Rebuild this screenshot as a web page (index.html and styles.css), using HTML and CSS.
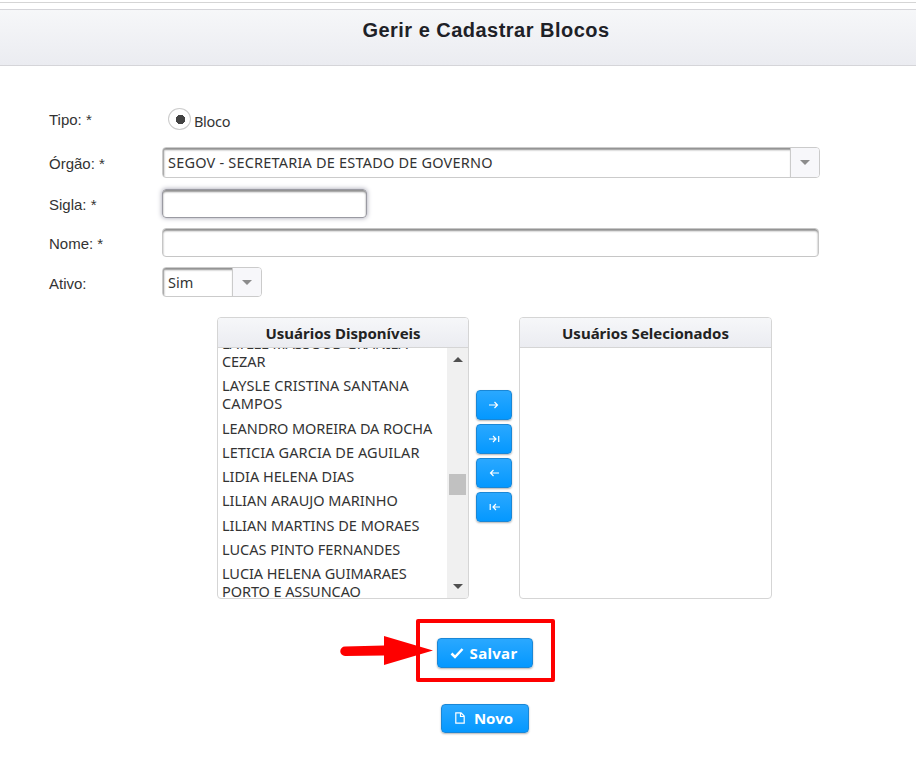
FILE: index.html
```html
<!DOCTYPE html>
<html lang="pt-BR">
<head>
<meta charset="utf-8">
<title>Gerir e Cadastrar Blocos</title>
<link rel="stylesheet" href="styles.css">
</head>
<body>
<div class="topline"></div>
<header class="titlebar"><h1>Gerir e Cadastrar Blocos</h1></header>
<main>
  <form class="fields">
    <div class="row row-tipo"><label>Tipo: *</label><span class="radio"></span><span class="radio-label">Bloco</span></div>
    <div class="row row-orgao"><label>Órgão: *</label>
      <div class="select select-wide"><div class="select-value"><span class="t-orgao">SEGOV - SECRETARIA DE ESTADO DE GOVERNO</span></div><div class="select-trigger"><i class="caret"></i></div></div>
    </div>
    <div class="row row-sigla"><label>Sigla: *</label><div class="input input-focus"></div></div>
    <div class="row row-nome"><label>Nome: *</label><div class="input input-wide"></div></div>
    <div class="row row-ativo"><label>Ativo:</label>
      <div class="select select-small"><div class="select-value">Sim</div><div class="select-trigger"><i class="caret"></i></div></div>
    </div>
  </form>
  <section class="picklist">
    <div class="panel">
      <h2>Usuários Disponíveis</h2>
      <div class="panel-body">
        <ul>
          <li>LAYLLE MASSOUD GRANIEA<br>CEZAR</li>
          <li class="wider">LAYSLE CRISTINA SANTANA<br>CAMPOS</li>
          <li class="narrower">LEANDRO MOREIRA DA ROCHA</li>
          <li class="wider">LETICIA GARCIA DE AGUILAR</li>
          <li>LIDIA HELENA DIAS</li>
          <li>LILIAN ARAUJO MARINHO</li>
          <li>LILIAN MARTINS DE MORAES</li>
          <li>LUCAS PINTO FERNANDES</li>
          <li class="narrower">LUCIA HELENA GUIMARAES<br>PORTO E ASSUNCAO</li>
        </ul>
        <div class="scrollbar"><i class="arrow-up"></i><i class="thumb"></i><i class="arrow-down"></i></div>
      </div>
    </div>
    <div class="transfer">
      <button class="btn"><svg viewBox="0 0 12 10"><path d="M1 5H9.500M6.500 2l3 3-3 3"/></svg></button>
      <button class="btn"><svg viewBox="0 0 12 10"><path d="M1 5H8M5 2l3 3-3 3M10.7 2v6"/></svg></button>
      <button class="btn"><svg viewBox="0 0 12 10"><path d="M11 5H2.500M5.500 2l-3 3 3 3"/></svg></button>
      <button class="btn"><svg viewBox="0 0 12 10"><path d="M12 5H5M8 2L5 5l3 3M2.200 2v6"/></svg></button>
    </div>
    <div class="panel panel-right">
      <h2>Usuários Selecionados</h2>
      <div class="panel-body"></div>
    </div>
  </section>
  <section class="actions">
    <div class="highlight">
      <button class="btn btn-save"><svg viewBox="0 0 14 12"><path d="M1.500 6.500l3.500 3.500L12.500 2"/></svg><span>Salvar</span></button>
      <svg class="pointer" viewBox="0 0 96 32"><path d="M6 11.500L45 10.500V1L94 15.500 45 30V20.500L6 21a4.700 4.700 0 0 1 0-9.500z"/></svg>
    </div>
    <button class="btn btn-new"><svg viewBox="0 0 10 12"><path d="M.8.800H6L9.200 4v7.200H.8zM5.500.800v3.700h3.700"/></svg><span>Novo</span></button>
  </section>
</main>
</body>
</html>
```
FILE: styles.css
```css
* { box-sizing: border-box; }
body { margin: 0; height: 760px; overflow: hidden; background: #fff; color: #333; font: 15px/18px "Noto Sans", sans-serif; }
.topline { height: 7px; border-top: 1px solid #d5d5d5; margin-top: 2px; }
.titlebar { height: 57px; border: solid #d5d5d9; border-width: 1px 0; background: linear-gradient(#f6f7f9, #ebecf1); padding: 9px 0 0 56px; text-align: center; }
h1 { margin: 0; font: bold 20px/23px "Liberation Sans", sans-serif; letter-spacing: .48px; color: #1e2127; }
.fields { margin: 0; padding: 39px 0 0 49px; }
.row { display: flex; align-items: flex-start; }
.row label { width: 113px; font: 15px/18px "Liberation Sans", sans-serif; }
.row-tipo { height: 42px; padding-top: 3px; }
.row-tipo label { padding-top: 3px; }
.row-orgao { height: 42px; }
.row-sigla { height: 39px; }
.row-nome { height: 39px; }
.row-orgao label, .row-ativo label { padding-top: 8px; }
.row-sigla label, .row-nome label { padding-top: 7px; }
.radio { width: 23px; height: 22px; margin-left: 6px; border: 1px solid #ccc; border-radius: 50%; background: radial-gradient(circle at 11.500px 10.500px, #444 0 4.500px, #fff 5px); }
.radio-label { margin: 4px 0 0 3px; font-size: 14.500px; letter-spacing: -.3px; }
.select { display: flex; height: 30px; border: 1px solid #cbcbcb; border-radius: 4px; overflow: hidden; }
.select-wide { width: 658px; height: 31px; }
.select-small { width: 100px; }
.select-value { flex: 1; padding: 5px 0 0 5px; white-space: nowrap; line-height: 18px; font-size: 14.500px; box-shadow: inset 1px 2px 2px #8f8f8f; }
.t-orgao { letter-spacing: .2px; }
.select-trigger { width: 29px; border-left: 1px solid #cbcbcb; background: #f7f7fa; display: flex; align-items: center; justify-content: center; }
.caret { border: solid transparent; border-width: 5px 5px 0; border-top-color: #8c8c8c; }
.input { height: 29px; border: 1px solid #c6c6c6; border-radius: 4px; box-shadow: inset 0 2px 2px #8f8f8f; }
.input-wide { width: 657px; }
.input-focus { width: 205px; border-color: #9a9aa2; box-shadow: inset 0 2px 2px #8f8f8f, 0 0 5px #a0a0b0; }
.picklist { display: flex; align-items: center; margin: 20px 0 0 217px; }
.panel { width: 252px; height: 282px; border: 1px solid #d5d5d5; border-radius: 4px; overflow: hidden; }
.panel-right { width: 253px; }
.panel h2 { margin: 0; height: 30px; border-bottom: 1px solid #d5d5d5; background: linear-gradient(#f6f7f9, #ebecf1); text-align: center; font: bold 15px/31px "Noto Sans", sans-serif; color: #222; }
.panel-body { display: flex; height: 251px; overflow: hidden; }
.panel ul { flex: 1; margin: -14px 0 0; padding: 0 0 0 4px; list-style: none; white-space: nowrap; font-size: 14.500px; }
.panel li { padding-bottom: 6.300px; }
.panel li:first-child { letter-spacing: -.1px; }
.panel .wider { letter-spacing: .1px; }
.panel .narrower { letter-spacing: -.08px; }
.scrollbar { width: 21px; background: #f0f0f0; display: flex; flex-direction: column; align-items: center; }
.arrow-up { margin-top: 9px; border: solid transparent; border-width: 0 5px 5px; border-bottom-color: #505050; }
.thumb { width: 17px; height: 21px; margin-top: 112px; background: #c1c1c1; }
.arrow-down { margin-top: 89px; border: solid transparent; border-width: 5px 5px 0; border-top-color: #505050; }
.transfer { display: flex; flex-direction: column; gap: 4px; margin: -4px 7px 0; }
.btn { display: flex; align-items: center; justify-content: center; width: 36px; height: 30px; padding: 0; border: 1px solid #1a87d6; border-radius: 4px; background: linear-gradient(#2aa8ff, #0498ff); box-shadow: 0 1px 2px rgba(0,0,0,.3); color: #fff; font: bold 15px/18px "Noto Sans", sans-serif; }
.btn svg { fill: none; stroke: #fff; stroke-width: 1.200; width: 12px; height: 10px; }
.actions { display: flex; flex-direction: column; align-items: flex-start; padding-left: 416px; margin-top: 20px; }
.highlight { position: relative; width: 139px; height: 63px; border: 4px solid #fe0000; border-radius: 2px; padding: 15px 0 0 17px; }
.btn-save { width: 96px; gap: 6px; padding-right: 3px; letter-spacing: .3px; }
.btn.btn-save svg { width: 14px; height: 12px; stroke-width: 2.500; }
.highlight .pointer { position: absolute; left: -81px; top: 12px; width: 96px; height: 32px; fill: #fe0000; }
.btn-new { width: 88px; height: 29px; margin: 22px 0 0 25px; gap: 9px; padding: 0 2px 1px 0; }
.btn-new svg { width: 10px; height: 12px; }
```
